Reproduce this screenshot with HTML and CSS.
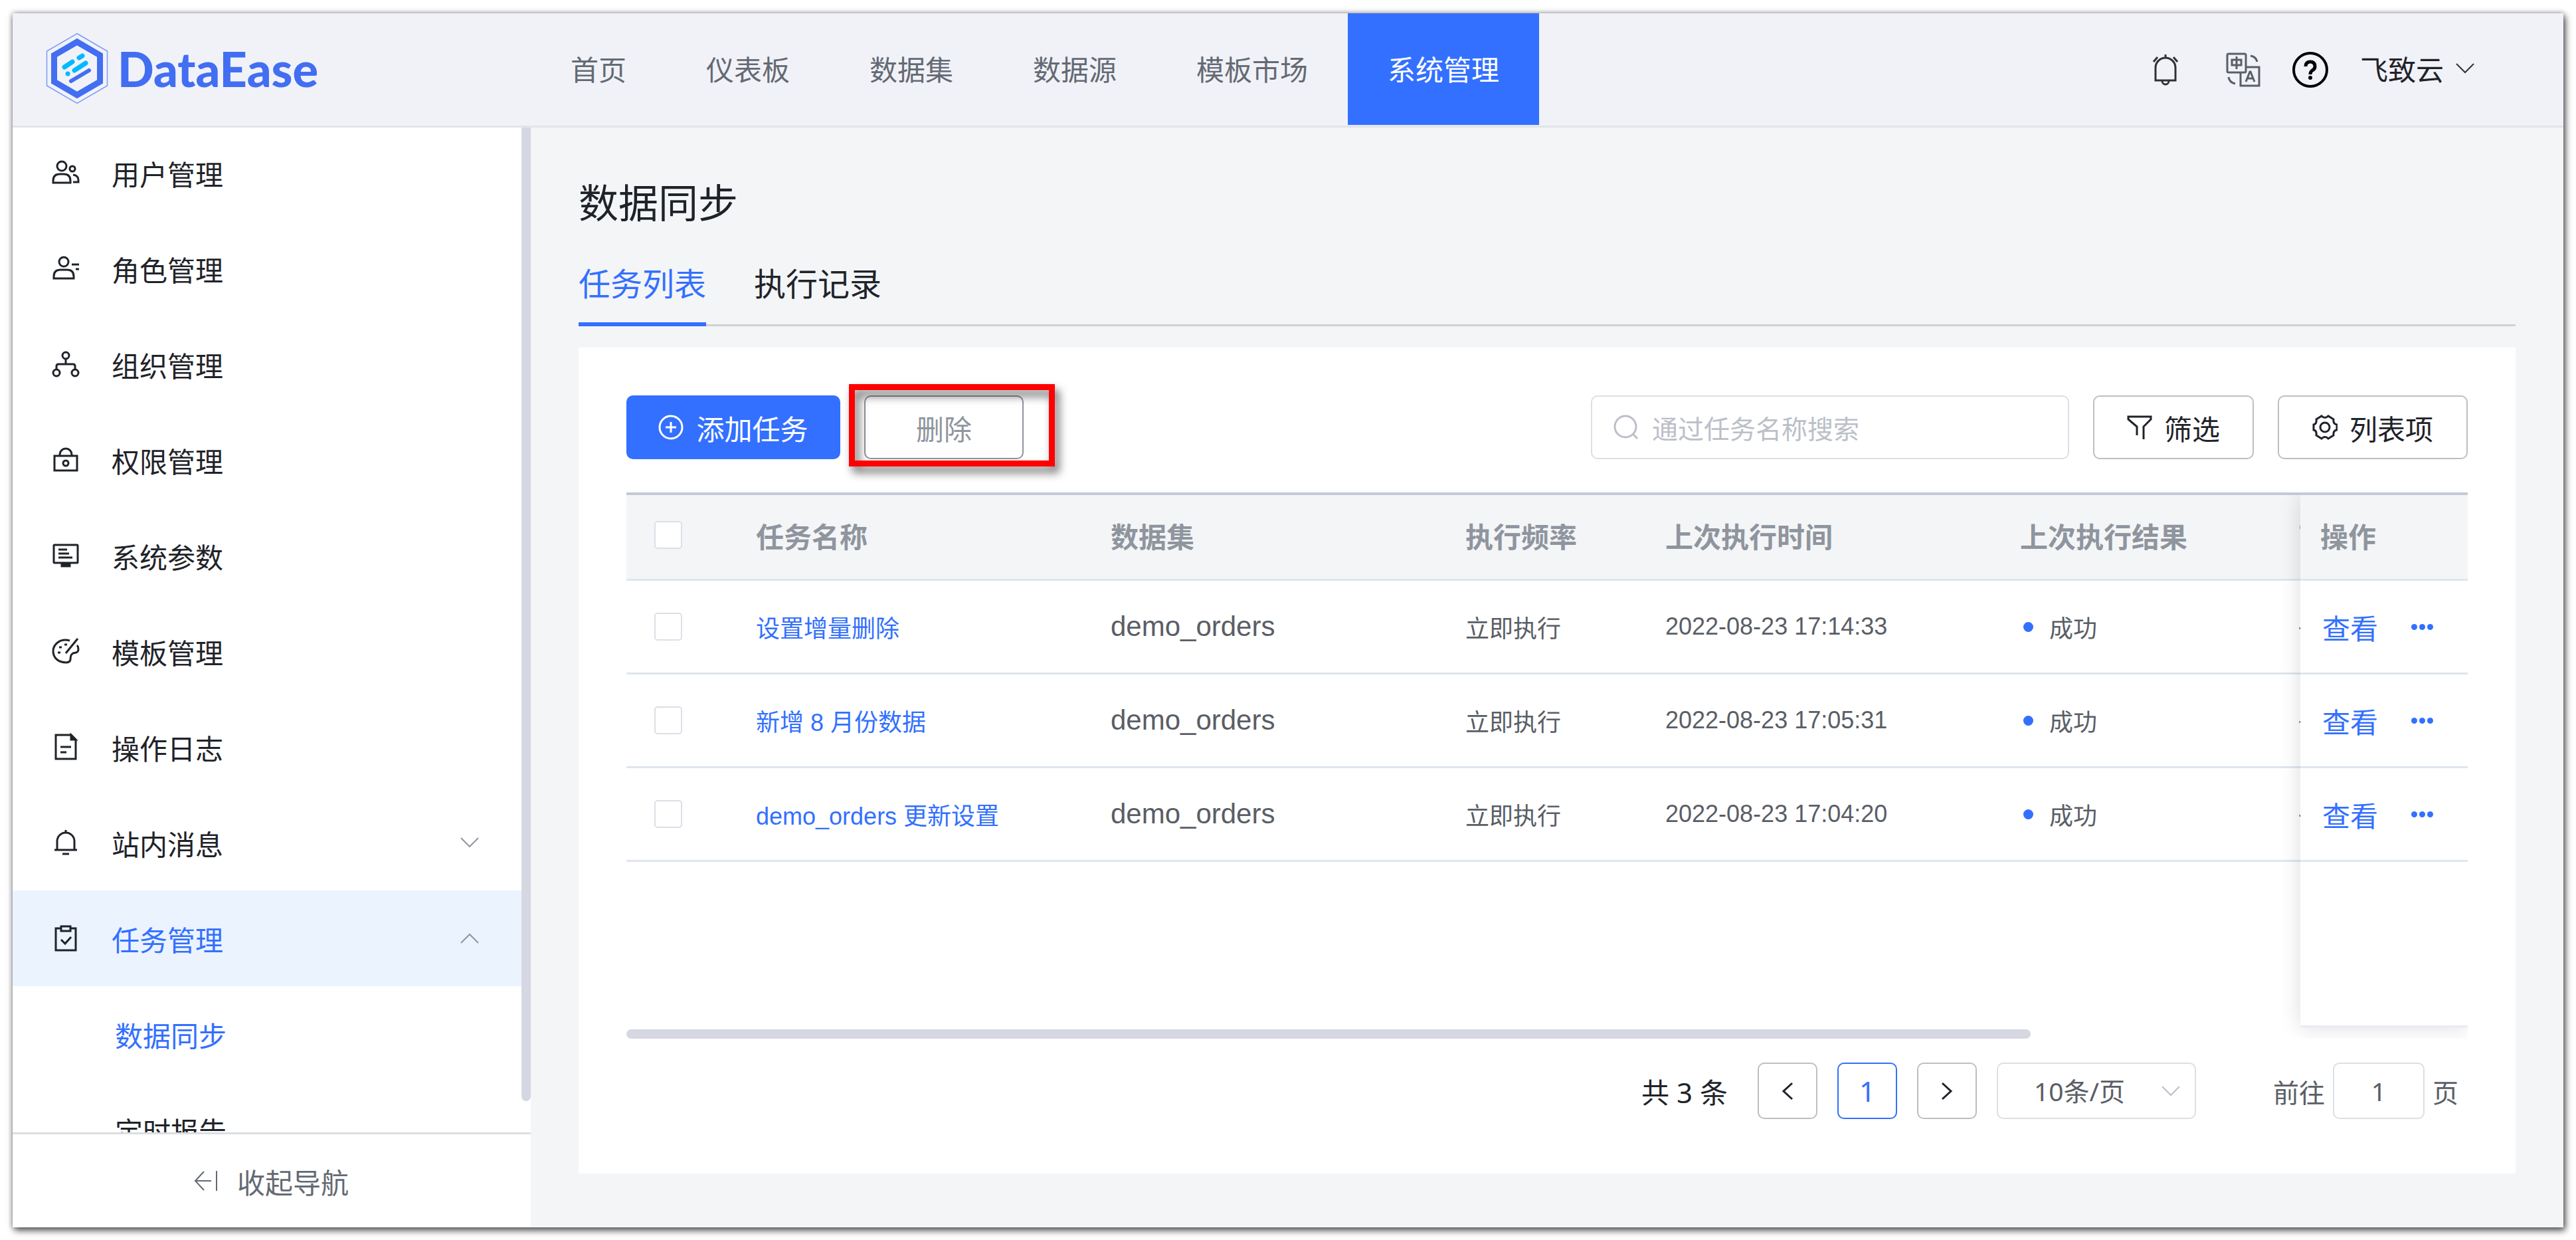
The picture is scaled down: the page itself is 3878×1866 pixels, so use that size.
FILE: index.html
```html
<!DOCTYPE html>
<html lang="zh-CN">
<head>
    <meta charset="UTF-8">
    <meta name="viewport" content="width=device-width, initial-scale=1.0">
    <title>DataEase - 数据同步</title>
    <link rel="stylesheet" href="styles.css">
</head>
<body>
    <div class="app">
        <header class="header">
            <a class="logo" href="#">
                <svg class="logo-mark" viewBox="0 0 94 108">
                    <path d="M47 1.500L92.500 28v52L47 106.500 1.500 80V28z" fill="none" stroke="#7f9bf5" stroke-width="1.500"/>
                    <path d="M47 14L81.500 34v40L47 94 12.500 74V34z" fill="#f1f2f8" stroke="#426ef2" stroke-width="9"/>
                    <g fill="none" stroke-width="7" stroke-linecap="round">
                        <path d="M28 52l12-8M50 38l5-3M43 57l17-11M33 62h.1" stroke="#00baff"/>
                        <path d="M38 73l27-16" stroke="#426ef2" stroke-width="6"/>
                    </g>
                </svg>
                <span class="logo-text">DataEase</span>
            </a>
            <nav class="top-nav">
                <a href="#">首页</a>
                <a href="#">仪表板</a>
                <a href="#">数据集</a>
                <a href="#">数据源</a>
                <a href="#">模板市场</a>
                <a href="#" class="active">系统管理</a>
            </nav>
            <div class="header-tools">
                <button class="icon-btn bell-btn" aria-label="消息">
                    <svg width="38" height="48" viewBox="0 0 38 48" fill="none" stroke="#303133" stroke-width="3">
                        <path d="M4 40V21a15 15 0 0 1 30 0v19H4zM19 1v6M7 5L1 12M31 5l6 7M14 41a5 5 0 0 0 10 0"/>
                    </svg>
                </button>
                <button class="icon-btn lang-btn" aria-label="语言">
                    <svg width="52" height="52" viewBox="0 0 52 52" fill="none" stroke="#5a5e66" stroke-width="3">
                        <rect x="2" y="2" width="28" height="28" rx="2"/>
                        <path d="M30 22h20v28H22V30M16 6v19M9 11h14v8H9zM30 44l6-15h1l6 15M32 39h9M37 5q8 1 10 9M4 37q1 8 10 10"/>
                    </svg>
                </button>
                <button class="icon-btn help-btn" aria-label="帮助">
                    <svg width="54" height="54" viewBox="0 0 54 54" fill="none" stroke="#000" stroke-width="4">
                        <circle cx="27" cy="27" r="25"/>
                        <path d="M20 22q0-7 7-7t7 7q0 4-4 6-3 2-3 6" stroke-width="5"/>
                        <circle cx="27" cy="39" r="3" fill="#000" stroke="none"/>
                    </svg>
                </button>
                <button class="user-btn">飞致云
                    <svg width="28" height="16" viewBox="0 0 28 16" fill="none" stroke="#303133" stroke-width="2"><path d="M1 1l13 13L27 1"/></svg>
                </button>
            </div>
        </header>

        <div class="body">
            <aside class="sidebar">
                <div class="menu-scroll">
                    <ul class="menu">
                        <li><a href="#">
                            <svg class="menu-icon" viewBox="0 0 42 42"><circle cx="15" cy="11" r="7"/><circle cx="31" cy="15" r="4"/><path d="M2 36v-3q0-10 10-10h6q10 0 10 10v3zM32 24q8 1 8 8v3h-8"/></svg>
                            用户管理</a></li>
                        <li><a href="#">
                            <svg class="menu-icon" viewBox="0 0 42 42"><circle cx="18" cy="11" r="7"/><path d="M3 36v-3q0-10 10-10h10q10 0 10 10v3zM30 15h11M36 22h5"/></svg>
                            角色管理</a></li>
                        <li><a href="#">
                            <svg class="menu-icon" viewBox="0 0 42 42"><circle cx="21" cy="8" r="5"/><circle cx="7" cy="34" r="5"/><circle cx="35" cy="34" r="5"/><path d="M21 13v8M7 29v-5q0-3 3-3h22q3 0 3 3v5"/></svg>
                            组织管理</a></li>
                        <li><a href="#">
                            <svg class="menu-icon" viewBox="0 0 42 42"><path d="M4 15h34v22H4zM12 15v-2a9 9 0 0 1 18 0v2"/><circle cx="21" cy="26" r="4"/></svg>
                            权限管理</a></li>
                        <li><a href="#">
                            <svg class="menu-icon" viewBox="0 0 42 42"><rect x="3" y="5" width="36" height="27" rx="1"/><path d="M10 12h13M10 18h16M10 24h21"/><path d="M15 33h12v4H15z" fill="#1f2329"/></svg>
                            系统参数</a></li>
                        <li><a href="#">
                            <svg class="menu-icon" viewBox="0 0 42 42"><path d="M27 5C12 1 2 11 2 21s8 17 20 17c11-1 2-10 10-14 3-1 8 0 8-6 0-3-1-5-2-6M39 2L21 24"/><path d="M9 23h4M11 15h4M19 11h4"/></svg>
                            模板管理</a></li>
                        <li><a href="#">
                            <svg class="menu-icon" viewBox="0 0 42 42"><path d="M6 3h23l7 7v29H6zM13 21h16M13 29h9"/><path d="M29 3v7h7z" fill="#1f2329"/></svg>
                            操作日志</a></li>
                        <li><a href="#">
                            <svg class="menu-icon" viewBox="0 0 42 42"><path d="M8 32V19a13 13 0 0 1 26 0v13M4 32h34M16 38h10M21 2v4"/></svg>
                            站内消息
                            <svg class="arrow" viewBox="0 0 28 16"><path d="M1 1l13 13L27 1"/></svg></a></li>
                        <li><a href="#" class="open">
                            <svg class="menu-icon" viewBox="0 0 42 42"><path d="M14 6H6v33h30V6h-8M14 3h14v7H14zM14 23l6 6 9-10"/></svg>
                            任务管理
                            <svg class="arrow" viewBox="0 0 28 16"><path d="M1 15L14 2l13 13"/></svg></a>
                            <ul class="submenu">
                                <li><a href="#" class="current">数据同步</a></li>
                                <li><a href="#">定时报告</a></li>
                            </ul>
                        </li>
                    </ul>
                    <div class="menu-thumb"></div>
                </div>
                <button class="collapse-btn">
                    <svg width="34" height="32" viewBox="0 0 34 32" fill="none" stroke="#646a73" stroke-width="2"><path d="M14 2L1 16l13 14M1 16h24M33 1v30"/></svg>
                    收起导航
                </button>
            </aside>

            <main class="main">
                <h1 class="page-title">数据同步</h1>
                <nav class="tabs">
                    <a href="#" class="active">任务列表</a>
                    <a href="#">执行记录</a>
                </nav>

                <section class="card">
                    <div class="toolbar">
                        <button class="btn btn-primary">
                            <svg width="39" height="39" viewBox="0 0 39 39" fill="none" stroke="#fff" stroke-width="3"><circle cx="19" cy="19" r="17"/><path d="M19 11v16M11 19h16"/></svg>
                            添加任务
                        </button>
                        <div class="marked">
                            <button class="btn btn-delete">删除</button>
                        </div>
                        <label class="search">
                            <svg width="38" height="38" viewBox="0 0 38 38" fill="none" stroke="#bbbfc8" stroke-width="3"><circle cx="18" cy="18" r="16"/><path d="M29 29l7 7"/></svg>
                            <input type="text" placeholder="通过任务名称搜索" aria-label="搜索">
                        </label>
                        <button class="btn btn-filter">
                            <svg width="38" height="38" viewBox="0 0 38 38" fill="none" stroke="#1f2329" stroke-width="3"><path d="M15 31V18L2 7V3h34v4L25 18v19"/></svg>
                            筛选
                        </button>
                        <button class="btn btn-columns">
                            <svg width="38" height="38" viewBox="0 0 38 38" fill="none" stroke="#1f2329" stroke-width="3"><path d="M14 2q5 5 10 0l8 5q-1 7 5 8v8q-6 1-5 8l-8 5q-5-5-10 0l-8-5q1-7-4-8v-8q5-1 4-8z"/><circle cx="19" cy="19" r="7"/></svg>
                            列表项
                        </button>
                    </div>

                    <div class="table-wrap">
                        <table class="task-table">
                            <colgroup>
                                <col class="col-check">
                                <col class="col-wide">
                                <col class="col-wide">
                                <col class="col-rate">
                                <col class="col-wide">
                                <col class="col-result">
                                <col>
                                <col class="col-action">
                            </colgroup>
                            <thead>
                                <tr>
                                    <th><input type="checkbox" aria-label="全选"></th>
                                    <th>任务名称</th>
                                    <th>数据集</th>
                                    <th>执行频率</th>
                                    <th>上次执行时间</th>
                                    <th>上次执行结果</th>
                                    <th>下次执行时间</th>
                                    <th class="fixed">操作</th>
                                </tr>
                            </thead>
                            <tbody>
                                <tr>
                                    <td><input type="checkbox" aria-label="选择"></td>
                                    <td><a href="#">设置增量删除</a></td>
                                    <td class="dataset">demo_orders</td>
                                    <td>立即执行</td>
                                    <td>2022-08-23 17:14:33</td>
                                    <td><span class="status">成功</span></td>
                                    <td>-</td>
                                    <td class="fixed"><div class="actions"><a href="#">查看</a><button class="more" aria-label="更多"><i></i><i></i><i></i></button></div></td>
                                </tr>
                                <tr>
                                    <td><input type="checkbox" aria-label="选择"></td>
                                    <td><a href="#">新增 8 月份数据</a></td>
                                    <td class="dataset">demo_orders</td>
                                    <td>立即执行</td>
                                    <td>2022-08-23 17:05:31</td>
                                    <td><span class="status">成功</span></td>
                                    <td>-</td>
                                    <td class="fixed"><div class="actions"><a href="#">查看</a><button class="more" aria-label="更多"><i></i><i></i><i></i></button></div></td>
                                </tr>
                                <tr>
                                    <td><input type="checkbox" aria-label="选择"></td>
                                    <td><a href="#">demo_orders 更新设置</a></td>
                                    <td class="dataset">demo_orders</td>
                                    <td>立即执行</td>
                                    <td>2022-08-23 17:04:20</td>
                                    <td><span class="status">成功</span></td>
                                    <td>-</td>
                                    <td class="fixed"><div class="actions"><a href="#">查看</a><button class="more" aria-label="更多"><i></i><i></i><i></i></button></div></td>
                                </tr>
                            </tbody>
                        </table>
                        <div class="fixed-panel"></div>
                        <div class="table-thumb"></div>
                    </div>

                    <div class="pagination">
                        <span class="total">共 3 条</span>
                        <button class="page-btn" aria-label="上一页"><svg width="18" height="28" viewBox="0 0 18 28"><path d="M16 2L3 14l13 12"/></svg></button>
                        <button class="page-btn active">1</button>
                        <button class="page-btn" aria-label="下一页"><svg width="18" height="28" viewBox="0 0 18 28"><path d="M2 2l13 12L2 26"/></svg></button>
                        <div class="size-select">
                            <select aria-label="每页条数">
                                <option>10条/页</option>
                            </select>
                            <svg class="arrow" viewBox="0 0 28 16"><path d="M1 1l13 13L27 1"/></svg>
                        </div>
                        <label class="jump">前往 <input type="text" value="1"> 页</label>
                    </div>
                </section>
            </main>
        </div>
    </div>
</body>
</html>
```
FILE: styles.css
```css
* {
    margin: 0;
    padding: 0;
    box-sizing: border-box;
}

body {
    font-family: 'Noto Sans CJK SC', sans-serif;
    font-size: 42px;
    color: #1f2329;
    background: white;
    overflow: hidden;
}

a {
    color: inherit;
    text-decoration: none;
}

ul {
    list-style: none;
}

button, input, select {
    font: inherit;
    color: inherit;
    background: none;
    border: none;
    outline: none;
}

button {
    cursor: pointer;
}

.app {
    display: flex;
    flex-direction: column;
    height: calc(100vh - 39px);
    margin: 20px 19px 19px;
    background: #f4f5f7;
    box-shadow: 3px 5px 10px rgba(0,0,0,0.6), 0 0 8px rgba(0,0,0,0.4);
}

/* header */
.header {
    display: flex;
    flex: none;
    height: 172px;
    background: #f1f2f8;
    border-bottom: 3px solid #e3e4e8;
}

.logo {
    display: flex;
    align-items: center;
    width: 780px;
    padding: 0 0 4px 50px;
    gap: 14px;
}

.logo-mark {
    width: 94px;
    height: 108px;
}

.logo-text {
    font-family: Lato, sans-serif;
    font-size: 72px;
    font-weight: 900;
    color: #426ef2;
}

.top-nav {
    display: flex;
    height: 168px;
}

.top-nav a {
    display: flex;
    align-items: center;
    padding: 0 60px 4px;
    color: #646a73;
}

.top-nav a.active {
    color: white;
    background: #3370ff;
}

.header-tools {
    display: flex;
    align-items: center;
    margin-left: auto;
    padding-right: 134px;
    gap: 48px;
}

.icon-btn {
    display: flex;
}

.bell-btn {
    margin-right: 24px;
}

.user-btn {
    display: flex;
    align-items: center;
    gap: 18px;
    padding-bottom: 4px;
}

/* sidebar */
.body {
    display: flex;
    flex: 1;
    min-height: 0;
}

.sidebar {
    display: flex;
    flex-direction: column;
    width: 780px;
    background: white;
}

.menu-scroll {
    position: relative;
    flex: 1;
    min-height: 0;
    overflow: hidden;
}

.menu {
    margin-top: -4px;
}

.menu a {
    display: flex;
    align-items: center;
    height: 144px;
    padding: 0 78px 0 59px;
}

.menu a.open {
    color: #3370ff;
    background: #ebf3ff;
}

.menu .submenu a {
    padding-left: 154px;
}

.submenu a.current {
    color: #3370ff;
}

.menu-icon {
    width: 42px;
    height: 42px;
    margin-right: 48px;
    fill: none;
    stroke: #1f2329;
    stroke-width: 3;
}

.arrow {
    width: 28px;
    height: 16px;
    margin-left: auto;
    fill: none;
    stroke: #8f959e;
    stroke-width: 2;
}

.menu-thumb {
    position: absolute;
    top: 0;
    right: 0;
    width: 14px;
    height: 1465px;
    background: #d5d8e2;
    border-radius: 0 0 7px 7px;
}

.collapse-btn {
    display: flex;
    align-items: center;
    justify-content: center;
    gap: 30px;
    height: 143px;
    color: #646a73;
    border-top: 3px solid #dcdee1;
}

/* content */
.main {
    display: flex;
    flex: 1;
    flex-direction: column;
    min-width: 0;
    padding: 68px 72px 81px;
}

.page-title {
    font-size: 60px;
    font-weight: 400;
    line-height: 84px;
}

.tabs {
    display: flex;
    gap: 72px;
    margin-top: 44px;
    font-size: 48px;
    line-height: 72px;
    border-bottom: 3px solid #d0d1d4;
}

.tabs a {
    padding-bottom: 25px;
    margin-bottom: -3px;
    border-bottom: 6px solid transparent;
}

.tabs a.active {
    color: #3370ff;
    border-bottom-color: #3370ff;
}

.card {
    display: flex;
    flex: 1;
    flex-direction: column;
    min-height: 0;
    margin-top: 32px;
    padding: 72px 72px 82px;
    background: white;
}

.toolbar {
    display: flex;
    gap: 36px;
}

.btn {
    display: flex;
    align-items: center;
    justify-content: center;
    gap: 18px;
    height: 96px;
    border: 2px solid #bbbfc4;
    border-radius: 10px;
}

.btn-primary {
    width: 322px;
    color: white;
    background: #3370ff;
    border-color: #3370ff;
}

.btn-delete {
    width: 240px;
    color: #8f959e;
    border-color: #8f959e;
}

.btn-filter {
    width: 242px;
}

.btn-columns {
    width: 286px;
}

/* red highlight frame around the delete button */
.marked {
    position: relative;
}

.marked::after {
    content: '';
    position: absolute;
    inset: -17px -47px -11px -23px;
    border: 9px solid #ff0000;
    filter: drop-shadow(6px 9px 7px rgba(0,0,0,0.6));
    pointer-events: none;
}

.search {
    display: flex;
    align-items: center;
    width: 720px;
    height: 96px;
    margin-left: auto;
    padding: 0 32px;
    gap: 20px;
    border: 2px solid #dcdfe6;
    border-radius: 10px;
}

.search input {
    flex: 1;
    min-width: 0;
    font-size: 39px;
}

.search input::placeholder {
    color: #bbbfc8;
}

/* table */
.table-wrap {
    position: relative;
    flex: 1;
    min-height: 0;
    margin-top: 50px;
    overflow: hidden;
    border-top: 4px solid #c5c9d6;
}

.task-table {
    width: 3635px;
    table-layout: fixed;
    border-collapse: separate;
    border-spacing: 0;
    font-family: 'Liberation Sans', 'Noto Sans CJK SC', sans-serif;
    font-size: 36px;
    color: #5a5e66;
}

.col-check {
    width: 165px;
}

.col-wide {
    width: 534px;
}

.col-rate {
    width: 301px;
}

.col-result {
    width: 419px;
}

.col-action {
    width: 252px;
}

.task-table th, .task-table td {
    height: 141px;
    padding: 0 30px;
    text-align: left;
    border-bottom: 3px solid #dfe6ec;
}

.task-table th {
    height: 129px;
    padding-bottom: 6px;
    font-size: 42px;
    font-weight: 700;
    color: #8f959e;
    background: #f4f5f7;
}

.task-table th:first-child, .task-table td:first-child {
    padding-left: 42px;
}

.task-table td {
    background: white;
}

.task-table td a {
    color: #3370ff;
}

.task-table .dataset {
    font-size: 42px;
}

.task-table .fixed {
    position: sticky;
    right: 0;
    z-index: 2;
}

.task-table input {
    display: block;
    appearance: none;
    width: 42px;
    height: 42px;
    background: white;
    border: 2px solid #dcdfe6;
    border-radius: 5px;
}

.status {
    display: flex;
    align-items: center;
    gap: 24px;
}

.status::before {
    content: '';
    width: 15px;
    height: 15px;
    margin-left: 5px;
    background: #3370ff;
    border-radius: 50%;
}

.actions {
    display: flex;
    align-items: center;
    gap: 50px;
    padding-left: 3px;
    font-size: 42px;
}

.more {
    display: flex;
    gap: 3px;
}

.more i {
    width: 9px;
    height: 9px;
    background: #3370ff;
    border-radius: 50%;
}

.fixed-panel {
    position: absolute;
    top: 0;
    right: 0;
    bottom: 17px;
    z-index: 1;
    width: 252px;
    background: white;
    border-bottom: 3px solid #e8ecf2;
    box-shadow: 0 0 30px rgba(0,0,0,0.14);
}

.table-thumb {
    position: absolute;
    left: 0;
    bottom: 0;
    width: 76.26%;
    height: 14px;
    background: #d5d8e2;
    border-radius: 7px;
}

/* pagination */
.pagination {
    display: flex;
    align-items: center;
    justify-content: flex-end;
    gap: 30px;
    height: 85px;
    margin-top: 36px;
    padding-right: 14px;
    font-family: 'Noto Sans', 'Noto Sans CJK SC', sans-serif;
}

.total {
    margin-right: 15px;
}

.page-btn {
    display: flex;
    align-items: center;
    justify-content: center;
    width: 90px;
    height: 85px;
    border: 2px solid #bbbfc4;
    border-radius: 10px;
}

.page-btn.active {
    color: #3370ff;
    border-color: #3370ff;
}

.page-btn svg {
    fill: none;
    stroke: #1f2329;
    stroke-width: 3;
}

.size-select {
    display: flex;
    align-items: center;
    position: relative;
    font-size: 39px;
    color: #5a5e66;
}

.size-select select {
    appearance: none;
    width: 300px;
    height: 85px;
    padding-left: 54px;
    border: 2px solid #dcdfe6;
    border-radius: 10px;
}

.size-select .arrow {
    position: absolute;
    right: 24px;
    stroke: #bbbfc8;
}

.jump {
    display: flex;
    align-items: center;
    gap: 12px;
    margin-left: 86px;
    font-size: 39px;
    color: #5a5e66;
}

.jump input {
    width: 138px;
    height: 85px;
    text-align: center;
    border: 2px solid #dcdfe6;
    border-radius: 10px;
}
```
